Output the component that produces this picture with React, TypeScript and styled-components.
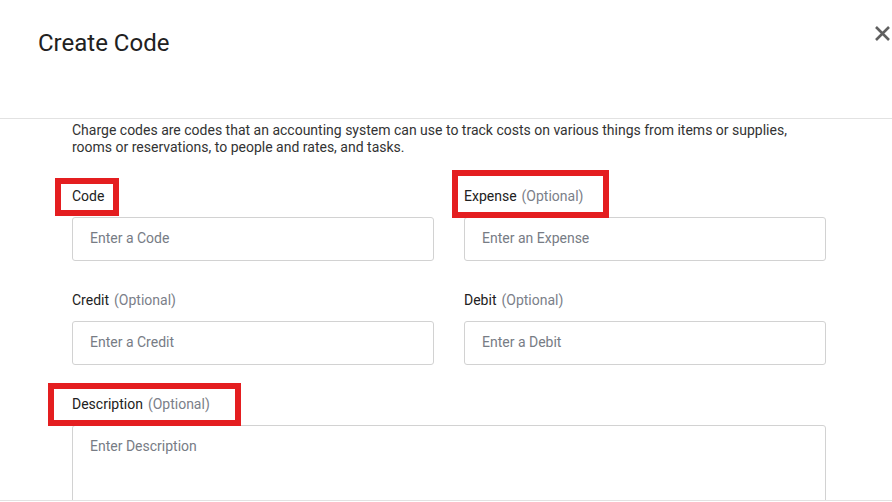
import React from "react";
import styled, { createGlobalStyle } from "styled-components";

const Global = createGlobalStyle`
  html, body { margin: 0; padding: 0; background: #fff; }
  body { font-family: Roboto, "Liberation Sans", Arial, sans-serif; }
  * { box-sizing: border-box; }
`;

const Modal = styled.div`
  width: 892px;
  height: 502px;
  background: #fff;
  display: flex;
  flex-direction: column;
  overflow: hidden;
`;

const Header = styled.header`
  height: 119px;
  flex: none;
  display: flex;
  justify-content: space-between;
  align-items: flex-start;
  padding: 25px 1px 0 38px;
  border-bottom: 1px solid #e2e2e2;
`;

const Title = styled.h1`
  margin: 4px 0 0;
  font-size: 24px;
  font-weight: 400;
  line-height: 28px;
  color: #212121;
`;

const CloseButton = styled.button`
  border: 0;
  background: none;
  padding: 0;
  width: 17px;
  height: 17px;
  display: flex;
  color: #606060;
  cursor: pointer;
`;

const Body = styled.div`
  flex: none;
  height: 381px;
  overflow: hidden;
  padding: 3px 66px 0 72px;
`;

const Intro = styled.p`
  margin: 0 0 30px;
  font-size: 14px;
  line-height: 16.8px;
  color: #333;
`;

const Grid = styled.div`
  display: grid;
  grid-template-columns: 1fr 1fr;
  column-gap: 30px;
  row-gap: 29px;
`;

const Field = styled.div<{ $wide?: boolean }>`
  display: flex;
  flex-direction: column;
  grid-column: ${(p) => (p.$wide ? "1 / -1" : "auto")};
`;

const Label = styled.label`
  position: relative;
  display: block;
  font-size: 14px;
  line-height: 20px;
  color: #212121;
  margin-bottom: 11px;
`;

const Optional = styled.span`
  color: #7b8089;
  margin-left: 5px;
`;

const Highlight = styled.span<{ $l: number; $t: number; $w: number; $h: number }>`
  position: absolute;
  left: ${(p) => p.$l}px;
  top: ${(p) => p.$t}px;
  width: ${(p) => p.$w}px;
  height: ${(p) => p.$h}px;
  border: 6px solid #e41e20;
  pointer-events: none;
`;

const Input = styled.input`
  height: 44px;
  width: 100%;
  border: 1px solid #d2d2d2;
  border-radius: 3px;
  padding: 0 17px 2px;
  font-family: inherit;
  font-size: 14px;
  color: #222;
  outline: none;
  &::placeholder { color: #777c85; }
`;

const TextArea = styled.textarea`
  height: 120px;
  width: 100%;
  border: 1px solid #d2d2d2;
  border-radius: 3px;
  padding: 12px 17px;
  font-family: inherit;
  font-size: 14px;
  line-height: 17px;
  color: #222;
  resize: none;
  outline: none;
  &::placeholder { color: #777c85; }
`;

const Footer = styled.div`
  flex: 1;
  border-top: 1px solid #e2e2e2;
`;

export default function App() {
  return (
    <>
      <Global />
      <Modal>
        <Header>
          <Title>Create Code</Title>
          <CloseButton aria-label="Close">
            <svg width="17" height="17" viewBox="0 0 17 17">
              <path d="M2 2 L15 15 M15 2 L2 15" stroke="currentColor" strokeWidth="2.6" fill="none" />
            </svg>
          </CloseButton>
        </Header>
        <Body>
          <Intro>
            Charge codes are codes that an accounting system can use to track costs on various things from items or supplies,
            rooms or reservations, to people and rates, and tasks.
          </Intro>
          <Grid>
            <Field>
              <Label>
                Code
                <Highlight $l={-17} $t={-8} $w={64} $h={38} />
              </Label>
              <Input placeholder="Enter a Code" />
            </Field>
            <Field>
              <Label>
                Expense<Optional>(Optional)</Optional>
                <Highlight $l={-12} $t={-16} $w={157} $h={48} />
              </Label>
              <Input placeholder="Enter an Expense" />
            </Field>
            <Field>
              <Label>
                Credit<Optional>(Optional)</Optional>
              </Label>
              <Input placeholder="Enter a Credit" />
            </Field>
            <Field>
              <Label>
                Debit<Optional>(Optional)</Optional>
              </Label>
              <Input placeholder="Enter a Debit" />
            </Field>
            <Field $wide>
              <Label>
                Description<Optional>(Optional)</Optional>
                <Highlight $l={-24} $t={-11} $w={193} $h={43} />
              </Label>
              <TextArea placeholder="Enter Description" />
            </Field>
          </Grid>
        </Body>
        <Footer />
      </Modal>
    </>
  );
}
